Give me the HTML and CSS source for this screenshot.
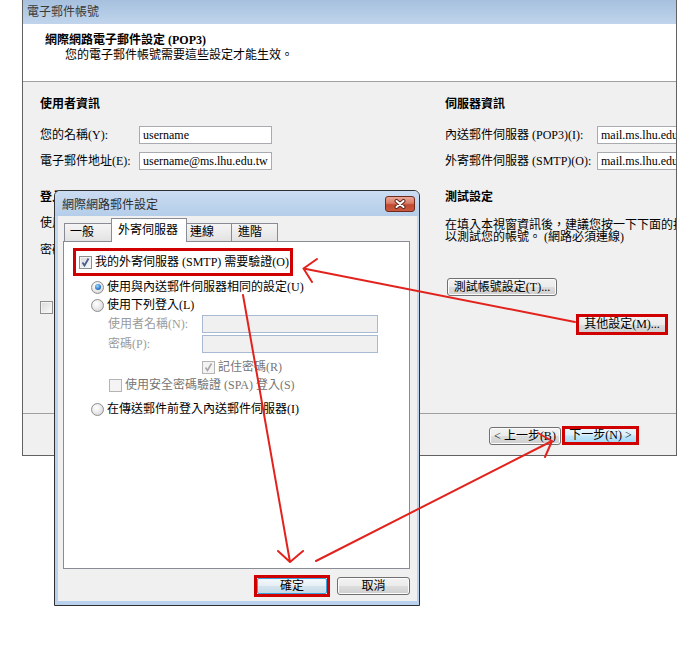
FILE: index.html
```html
<!DOCTYPE html>
<html lang="zh-Hant">
<head>
<meta charset="utf-8">
<title>電子郵件帳號</title>
<link rel="stylesheet" href="styles.css">
</head>
<body>
<div class="desk">
  <section class="win">
    <div class="win-title">電子郵件帳號</div>
    <header class="win-head">
      <div class="head-title">網際網路電子郵件設定 (POP3)</div>
      <div class="head-sub">您的電子郵件帳號需要這些設定才能生效。</div>
    </header>
    <div class="win-body">
      <div class="col col-left">
        <div class="sec">使用者資訊</div>
        <div class="row first"><span class="lbl lbl-l">您的名稱(Y):</span><span class="inp">username</span></div>
        <div class="row"><span class="lbl lbl-l">電子郵件地址(E):</span><span class="inp">username@ms.lhu.edu.tw</span></div>
        <div class="sec sec2">登入資訊</div>
        <div class="row tight"><span class="lbl lbl-l">使用者名稱(U):</span><span class="inp">username</span></div>
        <div class="row tight"><span class="lbl lbl-l">密碼(P):</span><span class="inp">********</span></div>
        <div class="opt remember-main"><span class="chk"></span><span class="opt-text">記住密碼(R)</span></div>
        <div class="opt spa-main"><span class="chk"></span><span class="opt-text">需要使用安全密碼驗證 (SPA) 登入(Q)</span></div>
      </div>
      <div class="col col-right">
        <div class="sec">伺服器資訊</div>
        <div class="row first"><span class="lbl lbl-r">內送郵件伺服器 (POP3)(I):</span><span class="inp">mail.ms.lhu.edu.tw</span></div>
        <div class="row"><span class="lbl lbl-r">外寄郵件伺服器 (SMTP)(O):</span><span class="inp">mail.ms.lhu.edu.tw</span></div>
        <div class="sec sec2">測試設定</div>
        <p class="note">在填入本視窗資訊後，建議您按一下下面的按鈕<br>以測試您的帳號。 (網路必須連線)</p>
        <button class="btn btn-test">測試帳號設定(T)...</button>
        <button class="btn btn-more mark">其他設定(M)...</button>
      </div>
    </div>
    <footer class="win-foot">
      <button class="btn btn-back">&lt; 上一步(B)</button>
      <button class="btn btn-next mark">下一步(N) &gt;</button>
    </footer>
  </section>

  <section class="dlg">
    <div class="dlg-title">
      <span>網際網路郵件設定</span>
      <span class="close"><svg width="14" height="10" viewBox="0 0 14 10"><path d="M3.5 2 L10.5 8 M10.5 2 L3.5 8" stroke="#5b2a20" stroke-width="4" stroke-linecap="round"/><path d="M3.5 2 L10.5 8 M10.5 2 L3.5 8" stroke="#ffffff" stroke-width="2" stroke-linecap="round"/></svg></span>
    </div>
    <div class="dlg-body">
      <div class="tabs">
        <span class="tab t1">一般</span>
        <span class="tab t2 sel">外寄伺服器</span>
        <span class="tab t3">連線</span>
        <span class="tab t4">進階</span>
      </div>
      <div class="panel">
        <div class="redbox"><span class="chk checked"><svg width="11" height="11" viewBox="0 0 11 11"><path d="M2.5 5.5 L4.5 8.5 L8.5 1.5" stroke="#4a5d8f" stroke-width="1.8" fill="none"/></svg></span><span class="opt-text">我的外寄伺服器 (SMTP) 需要驗證(O)</span></div>
        <div class="opt r1"><span class="rad on"></span><span class="opt-text">使用與內送郵件伺服器相同的設定(U)</span></div>
        <div class="opt r2"><span class="rad"></span><span class="opt-text">使用下列登入(L)</span></div>
        <div class="drow d1"><span class="dlbl">使用者名稱(N):</span><span class="dinp"></span></div>
        <div class="drow d2"><span class="dlbl">密碼(P):</span><span class="dinp"></span></div>
        <div class="opt rem"><span class="chk dis"><svg width="11" height="11" viewBox="0 0 11 11"><path d="M2.5 5.5 L4.5 8.5 L8.5 1.5" stroke="#a8a8a8" stroke-width="1.6" fill="none"/></svg></span><span class="opt-text gray">記住密碼(R)</span></div>
        <div class="opt spa"><span class="chk dis"></span><span class="opt-text gray">使用安全密碼驗證 (SPA) 登入(S)</span></div>
        <div class="opt r3"><span class="rad"></span><span class="opt-text">在傳送郵件前登入內送郵件伺服器(I)</span></div>
      </div>
      <div class="dlg-btns">
        <span class="okwrap"><button class="btn btn-ok">確定</button></span>
        <button class="btn btn-cancel">取消</button>
      </div>
    </div>
  </section>

  <svg class="arrows" width="700" height="645" viewBox="0 0 700 645">
    <g stroke="#e2231d" stroke-width="2" fill="none" stroke-linecap="round" stroke-linejoin="round">
      <path d="M575 322 L303.5 268.5 M317 259 L303.5 268.5 L312 282"/>
      <path d="M243 295 L290 562 M278 551 L290 562 L303 551"/>
      <path d="M316 561 L552 441 M538 433 L552 441 L545 457"/>
    </g>
  </svg>
</div>
</body>
</html>
```

FILE: styles.css
```css
html, body {
  margin: 0;
  padding: 0;
  background: #ffffff;
}

body {
  font-family: "Liberation Serif", "Noto Sans CJK TC", serif;
  font-size: 12px;
  color: #000;
}

.desk {
  position: relative;
  width: 700px;
  height: 645px;
  overflow: hidden;
}

/* ---------- main window ---------- */
.win {
  position: absolute;
  left: 22px;
  top: 0;
  width: 655px;
  height: 456px;
  box-sizing: border-box;
  border: 1px solid #626262;
  border-top: 0;
  background: #f0f0f0;
  display: flex;
  flex-direction: column;
  overflow: hidden;
  z-index: 1;
}

.win-title {
  flex: none;
  height: 24px;
  line-height: 24px;
  padding-left: 4px;
  color: #3a3a3a;
  background: linear-gradient(#a6c0de, #c0d5ec);
}

.win-head {
  flex: none;
  height: 58px;
  box-sizing: border-box;
  padding: 9px 0 0 22px;
  background: #ffffff;
  border-bottom: 1px solid #a0a0a0;
}

.head-title {
  font-weight: bold;
  line-height: 15px;
}

.head-sub {
  padding-left: 20px;
  line-height: 15px;
}

.win-body {
  flex: 1;
  display: grid;
  grid-template-columns: 405px minmax(0, 1fr);
  padding: 14px 0 0 17px;
  min-height: 0;
}

.col {
  display: flex;
  flex-direction: column;
  align-items: flex-start;
  white-space: nowrap;
  min-width: 0;
}

.sec {
  font-weight: bold;
  line-height: 16px;
  height: 16px;
}

.sec2 {
  margin-top: 19px;
}

.row {
  display: flex;
  align-items: center;
  height: 18px;
  margin-top: 8px;
}

.row.first {
  margin-top: 14px;
}

.row.tight {
  margin-top: 9px;
}

.lbl {
  flex: none;
  line-height: 16px;
}

.lbl-l { width: 99px; }
.lbl-r { width: 152px; }

.inp {
  flex: none;
  width: 133px;
  height: 18px;
  box-sizing: border-box;
  border: 1px solid #a9abb0;
  background: #ffffff;
  padding: 0 3px;
  line-height: 16px;
  overflow: hidden;
}

.note {
  margin: 14px 0 0;
  line-height: 12px;
}

.opt {
  display: flex;
  align-items: center;
  height: 16px;
}

.opt-text {
  margin-left: 3px;
  line-height: 16px;
  white-space: nowrap;
}

.remember-main {
  margin-top: 12px;
  margin-left: 99px;
}

.spa-main {
  margin-top: 12px;
}

/* ---------- controls ---------- */
.btn {
  font-family: inherit;
  font-size: 12px;
  color: #000;
  height: 18px;
  padding: 0;
  line-height: 16px;
  border: 1px solid #707070;
  border-radius: 3px;
  background: linear-gradient(#f2f2f2 0%, #ebebeb 50%, #dddddd 50%, #cfcfcf 100%);
  box-shadow: inset 0 0 0 1px #fcfcfc;
  white-space: nowrap;
  flex: none;
}

.btn.mark {
  border: 3px solid #d00000;
  border-radius: 0;
  box-shadow: none;
}

.btn-test {
  margin-top: 35px;
  margin-left: 2px;
  width: 110px;
}

.btn-more {
  margin-top: 18px;
  margin-left: 131px;
  width: 92px;
  height: 21px;
  line-height: 15px;
}

.win-foot {
  flex: none;
  height: 42px;
  box-sizing: border-box;
  border-top: 1px solid #a0a0a0;
  display: flex;
  justify-content: flex-end;
  align-items: flex-start;
  padding: 12px 37px 0 0;
}

.btn-back {
  width: 72px;
  margin-top: 1px;
  margin-right: 1px;
}

.btn-next {
  width: 77px;
  height: 19px;
  line-height: 13px;
  background: linear-gradient(#eaf6fd 0%, #d9f0fc 45%, #bee6fd 55%, #a7d9f5 100%);
}

.chk {
  position: relative;
  flex: none;
  width: 13px;
  height: 13px;
  box-sizing: border-box;
  border: 1px solid #8e8f8f;
  background: linear-gradient(135deg, #d9d9d9, #fafafa);
  box-shadow: inset 0 0 0 1px #f3f3f3;
  display: flex;
  align-items: center;
  justify-content: center;
}

.chk svg {
  display: block;
}

.chk.dis {
  border-color: #b4b4b4;
  background: #f4f4f4;
}

.rad {
  position: relative;
  flex: none;
  width: 13px;
  height: 13px;
  box-sizing: border-box;
  border-radius: 50%;
  border: 1px solid #8d8d8d;
  background: radial-gradient(circle at 40% 35%, #ffffff 0%, #eeeeee 40%, #cfcfcf 100%);
}

.rad.on::after {
  content: "";
  position: absolute;
  left: 2.5px;
  top: 2.5px;
  width: 6px;
  height: 6px;
  border-radius: 50%;
  background: radial-gradient(circle at 40% 35%, #9fdcff 0%, #2f7fd0 55%, #164f92 100%);
}

/* ---------- dialog ---------- */
.dlg {
  position: absolute;
  left: 54px;
  top: 190px;
  width: 366px;
  height: 416px;
  box-sizing: border-box;
  border: 1px solid #303030;
  border-radius: 6px 6px 0 0;
  background: linear-gradient(#c4d9f0, #b9d1ec);
  display: flex;
  flex-direction: column;
  z-index: 2;
}

.dlg-title {
  flex: none;
  height: 25px;
  padding: 0 4px 0 7px;
  display: flex;
  align-items: center;
  justify-content: space-between;
  color: #2c2c2c;
  border-radius: 5px 5px 0 0;
  background: linear-gradient(#cadcf1, #b4cde9);
}

.close {
  width: 30px;
  height: 16px;
  box-sizing: border-box;
  border: 1px solid #6e2a1d;
  border-radius: 3px;
  background: linear-gradient(#eaa798 0%, #d97a64 45%, #c24a31 55%, #c9583e 100%);
  display: flex;
  align-items: center;
  justify-content: center;
}

.close svg {
  display: block;
}

.dlg-body {
  flex: 1;
  margin: 0 2px 4px 3px;
  background: #f0f0f0;
  padding: 2px 0 0 5px;
  display: flex;
  flex-direction: column;
  align-items: flex-start;
}

.tabs {
  display: flex;
  align-items: flex-end;
  height: 23px;
  margin-left: 1px;
  position: relative;
  z-index: 1;
}

.tab {
  box-sizing: border-box;
  height: 18px;
  border: 1px solid #898c95;
  border-bottom: 0;
  padding-left: 5px;
  line-height: 17px;
  background: linear-gradient(#f5f5f5, #e3e3e3);
  white-space: nowrap;
}

.tab + .tab {
  margin-left: -1px;
}

.t1 { width: 48px; }
.t2 { width: 76px; }
.t3 { width: 46px; padding-left: 3px; }
.t4 { width: 47px; padding-left: 6px; }

.tab.sel {
  height: 24px;
  margin-bottom: -1px;
  background: #ffffff;
  line-height: 22px;
  padding-left: 6px;
}

.panel {
  width: 347px;
  height: 328px;
  box-sizing: border-box;
  border: 1px solid #898c95;
  background: #ffffff;
  padding: 6px 0 0 9px;
  display: flex;
  flex-direction: column;
  align-items: flex-start;
}

.redbox {
  width: 220px;
  height: 28px;
  box-sizing: border-box;
  border: 3px solid #d10000;
  padding-left: 3px;
  display: flex;
  align-items: center;
}

.r1 { margin: 3px 0 0 18px; }
.r2 { margin: 2px 0 0 18px; }
.r3 { margin: 8px 0 0 18px; }

.drow {
  display: flex;
  align-items: center;
  height: 18px;
  margin: 2px 0 0 35px;
}

.dlbl {
  width: 94px;
  color: #9b9b9b;
  line-height: 16px;
}

.dinp {
  width: 176px;
  height: 18px;
  box-sizing: border-box;
  border: 1px solid #a8bad3;
  background: #f0f0f0;
}

.rem { margin: 6px 0 0 129px; }
.spa { margin: 2px 0 0 36px; }

.gray {
  color: #767676;
}

.dlg-btns {
  width: 347px;
  margin-top: 6px;
  display: flex;
  justify-content: flex-end;
  align-items: center;
  gap: 7px;
}

.okwrap {
  display: flex;
  border: 3px solid #d10000;
}

.btn-ok {
  width: 70px;
  height: 16px;
  line-height: 14px;
  border: 1px solid #3c9fd8;
  border-radius: 2px;
  background: linear-gradient(#f3f8fb 0%, #e6eff5 48%, #d4e4ee 52%, #c6dbe8 100%);
  box-shadow: none;
}

.btn-cancel {
  width: 73px;
}

/* ---------- annotations ---------- */
.arrows {
  position: absolute;
  left: 0;
  top: 0;
  z-index: 3;
  pointer-events: none;
}
```
